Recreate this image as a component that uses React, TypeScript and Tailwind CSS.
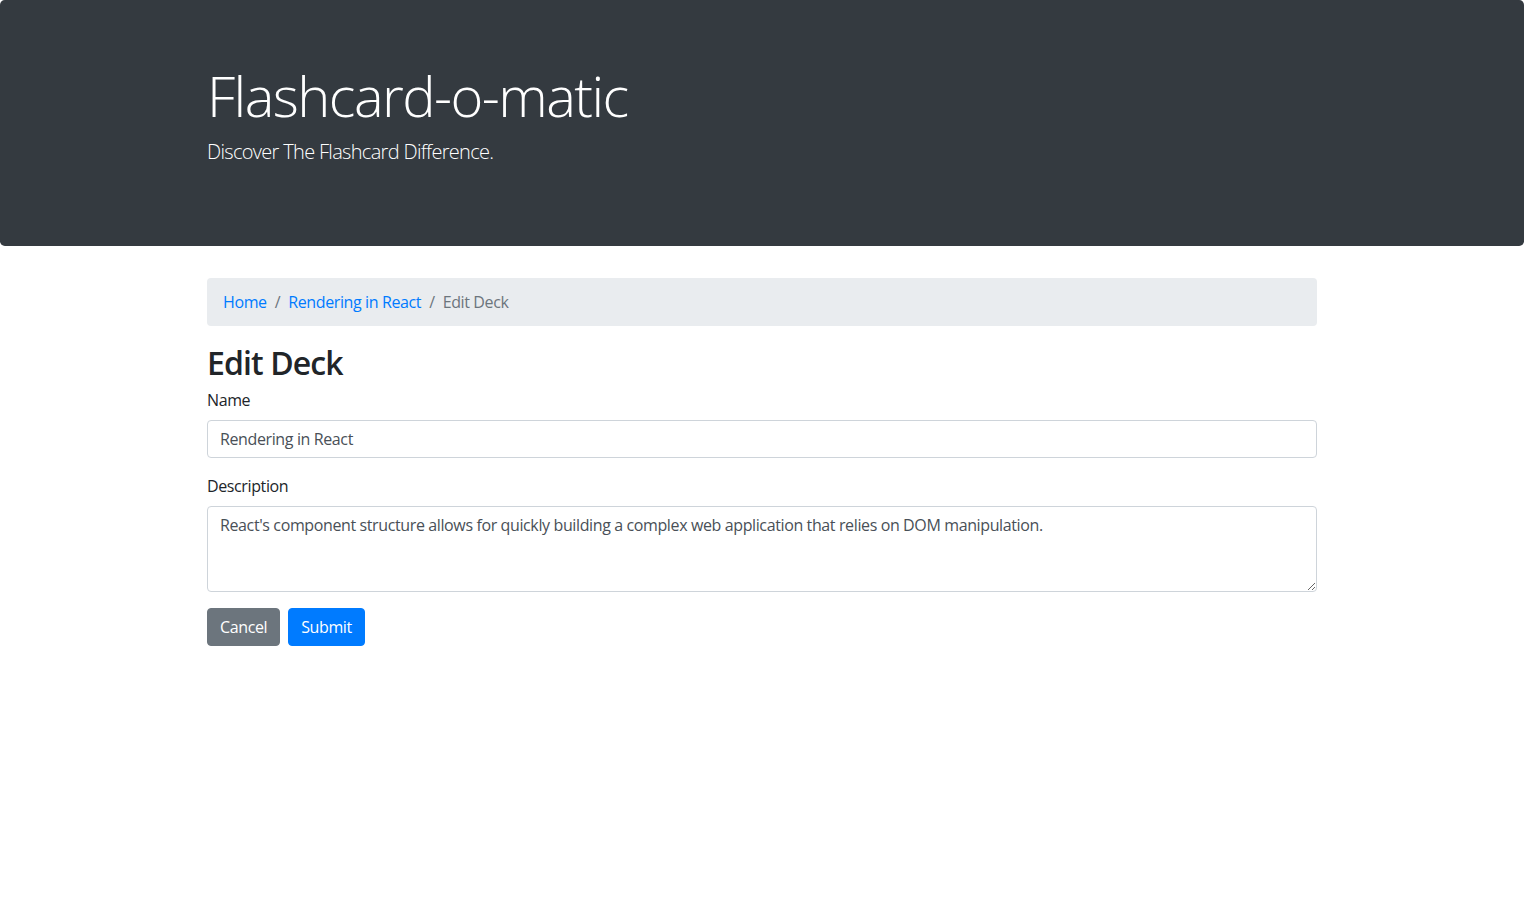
import { useState } from "react";

const font = { fontFamily: '"Open Sans", "Noto Sans", sans-serif' };

function Header() {
  return (
    <div className="bg-[#343a40] text-white rounded-[4.8px] mb-8">
      <div className="max-w-[1140px] mx-auto px-[15px] pt-[62px] pb-[63px]">
        <h1 className="text-[56px] leading-[67px] font-light mb-2 tracking-[-1.55px]">
          Flashcard-o-matic
        </h1>
        <p className="text-[20px] leading-[30px] font-light mb-4 tracking-[-0.68px]">
          Discover The Flashcard Difference.
        </p>
      </div>
    </div>
  );
}

function Breadcrumb() {
  return (
    <nav className="bg-[#e9ecef] rounded-[4px] px-4 py-3 mb-4 text-[16px] leading-6">
      <ol className="flex items-center">
        <li>
          <a href="#" className="text-[#007bff]">
            Home
          </a>
        </li>
        <li className="flex">
          <span className="px-2 text-[#6c757d]">/</span>
          <a href="#" className="text-[#007bff]">
            Rendering in React
          </a>
        </li>
        <li className="flex text-[#6c757d]">
          <span className="px-2">/</span>
          Edit Deck
        </li>
      </ol>
    </nav>
  );
}

export default function App() {
  const [name, setName] = useState("Rendering in React");
  const [description, setDescription] = useState(
    "React's component structure allows for quickly building a complex web application that relies on DOM manipulation."
  );

  return (
    <div className="bg-white min-h-[922px] text-[#212529] tracking-[-0.38px]" style={font}>
      <Header />
      <div className="max-w-[1140px] mx-auto px-[15px]">
        <Breadcrumb />
        <h2 className="text-[32px] leading-[38px] font-semibold pt-0.5 mb-1.5 tracking-[-0.9px]">
          Edit Deck
        </h2>
        <form onSubmit={(e) => e.preventDefault()}>
          <div className="mb-4">
            <label htmlFor="name" className="block text-[16px] leading-6 mb-2">
              Name
            </label>
            <input
              id="name"
              type="text"
              value={name}
              onChange={(e) => setName(e.target.value)}
              className="block w-full h-[38px] px-3 py-1.5 text-[16px] leading-6 text-[#495057] bg-white border border-[#ced4da] rounded-[4px] outline-none tracking-[-0.38px]"
            />
          </div>
          <div className="mb-4">
            <label htmlFor="description" className="block text-[16px] leading-6 mb-2">
              Description
            </label>
            <textarea
              id="description"
              rows={3}
              value={description}
              onChange={(e) => setDescription(e.target.value)}
              className="block w-full h-[86px] px-3 py-1.5 text-[16px] leading-6 text-[#495057] bg-white border border-[#ced4da] rounded-[4px] outline-none tracking-[-0.38px]"
            />
          </div>
          <div className="flex gap-2">
            <button
              type="button"
              className="h-[38px] px-3 text-[16px] leading-6 text-white bg-[#6c757d] border border-[#6c757d] rounded-[4px] tracking-[-0.38px]"
            >
              Cancel
            </button>
            <button
              type="submit"
              className="h-[38px] px-3 text-[16px] leading-6 text-white bg-[#007bff] border border-[#007bff] rounded-[4px] tracking-[-0.38px]"
            >
              Submit
            </button>
          </div>
        </form>
      </div>
    </div>
  );
}
